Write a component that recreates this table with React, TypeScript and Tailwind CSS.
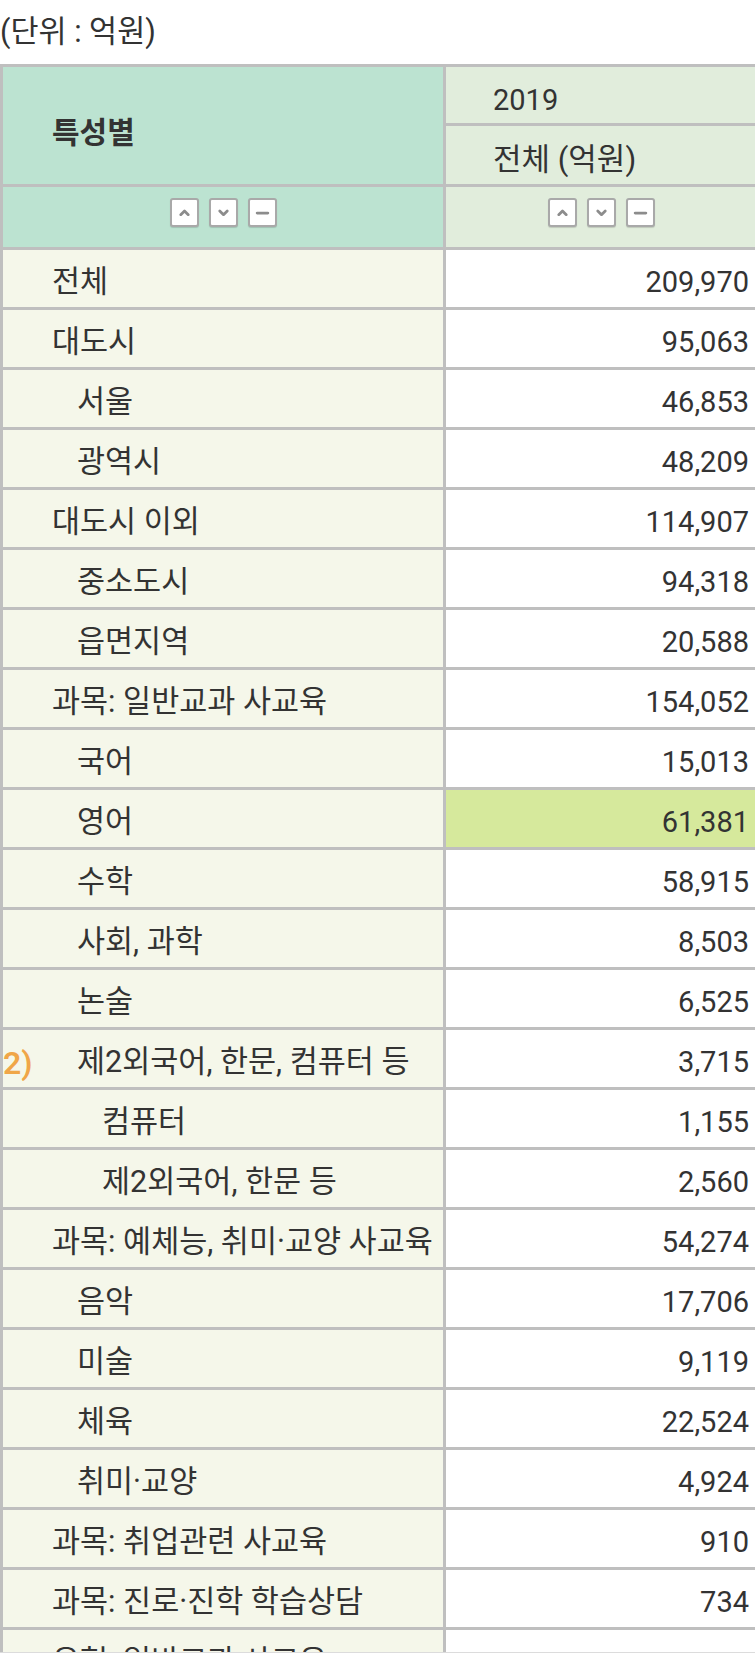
import React from "react";

type Row = { label: string; value: string; level: 1 | 2 | 3; hl?: boolean; mark?: string };

const rows: Row[] = [
  { label: "전체", value: "209,970", level: 1 },
  { label: "대도시", value: "95,063", level: 1 },
  { label: "서울", value: "46,853", level: 2 },
  { label: "광역시", value: "48,209", level: 2 },
  { label: "대도시 이외", value: "114,907", level: 1 },
  { label: "중소도시", value: "94,318", level: 2 },
  { label: "읍면지역", value: "20,588", level: 2 },
  { label: "과목: 일반교과 사교육", value: "154,052", level: 1 },
  { label: "국어", value: "15,013", level: 2 },
  { label: "영어", value: "61,381", level: 2, hl: true },
  { label: "수학", value: "58,915", level: 2 },
  { label: "사회, 과학", value: "8,503", level: 2 },
  { label: "논술", value: "6,525", level: 2 },
  { label: "제2외국어, 한문, 컴퓨터 등", value: "3,715", level: 2, mark: "2)" },
  { label: "컴퓨터", value: "1,155", level: 3 },
  { label: "제2외국어, 한문 등", value: "2,560", level: 3 },
  { label: "과목: 예체능, 취미·교양 사교육", value: "54,274", level: 1 },
  { label: "음악", value: "17,706", level: 2 },
  { label: "미술", value: "9,119", level: 2 },
  { label: "체육", value: "22,524", level: 2 },
  { label: "취미·교양", value: "4,924", level: 2 },
  { label: "과목: 취업관련 사교육", value: "910", level: 1 },
  { label: "과목: 진로·진학 학습상담", value: "734", level: 1 },
  { label: "유형: 일반교과 사교육", value: "", level: 1 },
];

const pad: Record<number, string> = {
  1: "pl-[49px]",
  2: "pl-[74px]",
  3: "pl-[99px]",
};

function Btn({ kind }: { kind: "up" | "down" | "minus" }) {
  return (
    <div className="w-[29px] h-[29px] bg-white border-2 border-[#a9a9a9] rounded-[3px] flex items-center justify-center shadow-[0_1px_1px_rgba(0,0,0,0.15)]">
      <svg width="15" height="15" viewBox="0 0 14 14" fill="none" stroke="#8c8c8c" strokeWidth="2.6" strokeLinecap="round" strokeLinejoin="round">
        {kind === "up" && <polyline points="3.5,9 7,5.5 10.5,9" />}
        {kind === "down" && <polyline points="3.5,5.5 7,9 10.5,5.5" />}
        {kind === "minus" && <line x1="2" y1="7.5" x2="12" y2="7.5" />}
      </svg>
    </div>
  );
}

function BtnGroup() {
  return (
    <div className="flex gap-[10px]">
      <Btn kind="up" />
      <Btn kind="down" />
      <Btn kind="minus" />
    </div>
  );
}

export default function App() {
  return (
    <div className="w-[755px] h-[1666px] overflow-hidden bg-white text-[#333] font-['Roboto','Noto_Sans_CJK_KR',sans-serif] text-[29px] leading-none">
      <div className="h-[1652px] overflow-hidden">
        <div className="h-[64px] pt-[17px] text-[30.5px]">(단위 : 억원)</div>
        <div className="w-[760px] border-[3px] border-[#bfbfbf]">
          {/* header rows 1-2 */}
          <div className="flex">
            <div className="w-[443px] h-[117px] border-r-[3px] border-[#bfbfbf] bg-[#bce3d1] flex items-center pl-[49px] pt-[14px] font-bold text-[30px]">
              특성별
            </div>
            <div className="flex-1 bg-[#e1eddc]">
              <div className="h-[56px] flex items-center pl-[47px] pt-[10px]">2019</div>
              <div className="h-[61px] border-t-[3px] border-[#bfbfbf] flex items-center pl-[47px] pt-[8px] text-[31px]">전체 (억원)</div>
            </div>
          </div>
          {/* button row */}
          <div className="flex border-t-[3px] border-[#bfbfbf] h-[63px]">
            <div className="w-[443px] border-r-[3px] border-[#bfbfbf] bg-[#bce3d1] flex justify-center items-start pt-[11px]">
              <BtnGroup />
            </div>
            <div className="flex-1 bg-[#e1eddc] flex justify-center items-start pt-[11px]">
              <BtnGroup />
            </div>
          </div>
          {/* data rows */}
          {rows.map((r, i) => (
            <div key={i} className="flex border-t-[3px] border-[#bfbfbf] h-[60px]">
              <div
                className={`w-[443px] border-r-[3px] border-[#bfbfbf] bg-[#f5f7ea] flex items-center pt-[8px] whitespace-nowrap text-[30.5px] ${
                  r.mark ? "pl-0" : pad[r.level]
                }`}
              >
                {r.mark && <span className="w-[74px] text-[#f0a648] font-semibold text-[32px]">{r.mark}</span>}
                <span>{r.label}</span>
              </div>
              <div
                className={`flex-1 flex items-center justify-end pr-[8px] pt-[7px] ${
                  r.hl ? "bg-[#d6e99c]" : "bg-white"
                }`}
              >
                {r.value}
              </div>
            </div>
          ))}
        </div>
      </div>
      <div className="border-t border-[#dcdcdc] h-[14px] bg-white" />
    </div>
  );
}
